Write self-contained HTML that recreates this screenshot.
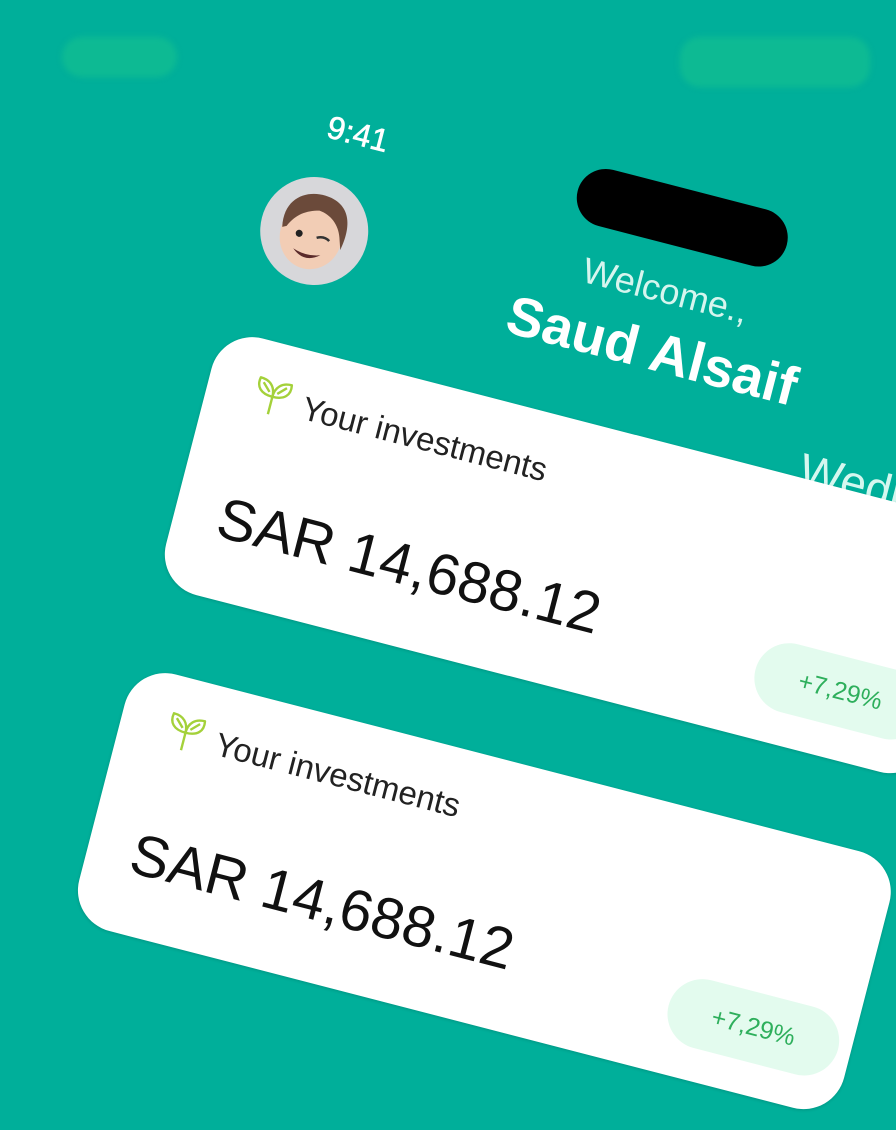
<!DOCTYPE html>
<html><head><meta charset="utf-8"><style>
html,body{margin:0;padding:0}
body{width:896px;height:1000px;overflow:hidden;background:#00AF9A;position:relative;font-family:"Liberation Sans",sans-serif}
.blob{position:absolute;background:#0DBA93;filter:blur(3px);border-radius:20px}
#c{position:absolute;left:222px;top:328px;width:0;height:0;transform-origin:0 0;transform:rotate(14.5deg)}
#c>*{position:absolute}
.card{left:0;width:790px;height:265px;background:#fff;border-radius:42px;box-shadow:0 1px 3px rgba(0,0,0,.15)}
.card .lbl{position:absolute;left:98px;top:38px;font-size:33px;color:#222;white-space:nowrap}
.card .amt{position:absolute;left:44px;top:150px;font-size:58px;color:#111;white-space:nowrap}
.card .pill{position:absolute;left:602px;top:162px;width:175px;height:70px;border-radius:35px;background:#E3FBEE;color:#2EAF5C;font-size:25px;line-height:70px;text-align:center}
.card svg{position:absolute;left:44px;top:30px}
</style></head><body>
<div class="blob" style="left:62px;top:37px;width:115px;height:40px"></div>
<div class="blob" style="left:680px;top:37px;width:190px;height:50px"></div>
<div id="c">
  <div style="left:52px;top:-240px;font-size:32px;color:#fff;-webkit-text-stroke:0.6px #fff">9:41</div>
  <div style="left:11px;top:-171px;width:108px;height:108px;border-radius:50%;background:#D7D7DA;overflow:hidden">
    <svg width="108" height="108" viewBox="0 0 108 108">
      <ellipse cx="52" cy="60" rx="31" ry="33" fill="#F2CDB5"/>
      <path d="M22 58 C16 28 38 16 56 17 C80 18 90 36 84 66 L80 54 C76 42 66 34 54 33 C42 36 32 42 26 56 Z" fill="#6B4A3A"/>
      <circle cx="40" cy="60" r="3.5" fill="#222"/>
      <path d="M58 60 Q65 56 71 60" stroke="#333" stroke-width="2.5" fill="none"/>
      <path d="M38 76 Q52 88 66 76 Q52 81 38 76Z" fill="#5a2a2a"/>
    </svg>
  </div>
  <div style="left:310px;top:-251px;width:216px;height:58px;border-radius:29px;background:#000"></div>
  <div style="left:220px;top:-168px;width:400px;text-align:center;font-size:36px;color:#D6F5EE">Welcome.,</div>
  <div style="left:172px;top:-118px;width:500px;text-align:center;font-size:55px;font-weight:bold;color:#fff">Saud Alsaif</div>
  <div style="left:595px;top:-36px;font-size:46px;color:#D5F7EF">Wednesday</div>
  <div class="card" style="top:0">
    <svg width="48" height="48" viewBox="0 0 48 48" fill="none" stroke="#A4D13A" stroke-width="2.4" stroke-linejoin="round"><path d="M22 42 L22 24"/><path d="M22 24 C10 24 4 18 6 8 C16 8 22 14 22 24Z"/><path d="M22 24 C34 24 40 18 38 8 C28 8 22 14 22 24Z"/><path d="M10 12 L18 20 M34 12 L26 20"/></svg>
    <div class="lbl">Your investments</div>
    <div class="amt">SAR 14,688.12</div>
    <div class="pill">+7,29%</div>
  </div>
  <div class="card" style="top:347px">
    <svg width="48" height="48" viewBox="0 0 48 48" fill="none" stroke="#A4D13A" stroke-width="2.4" stroke-linejoin="round"><path d="M22 42 L22 24"/><path d="M22 24 C10 24 4 18 6 8 C16 8 22 14 22 24Z"/><path d="M22 24 C34 24 40 18 38 8 C28 8 22 14 22 24Z"/><path d="M10 12 L18 20 M34 12 L26 20"/></svg>
    <div class="lbl">Your investments</div>
    <div class="amt">SAR 14,688.12</div>
    <div class="pill">+7,29%</div>
  </div>
</div>
</body></html>
